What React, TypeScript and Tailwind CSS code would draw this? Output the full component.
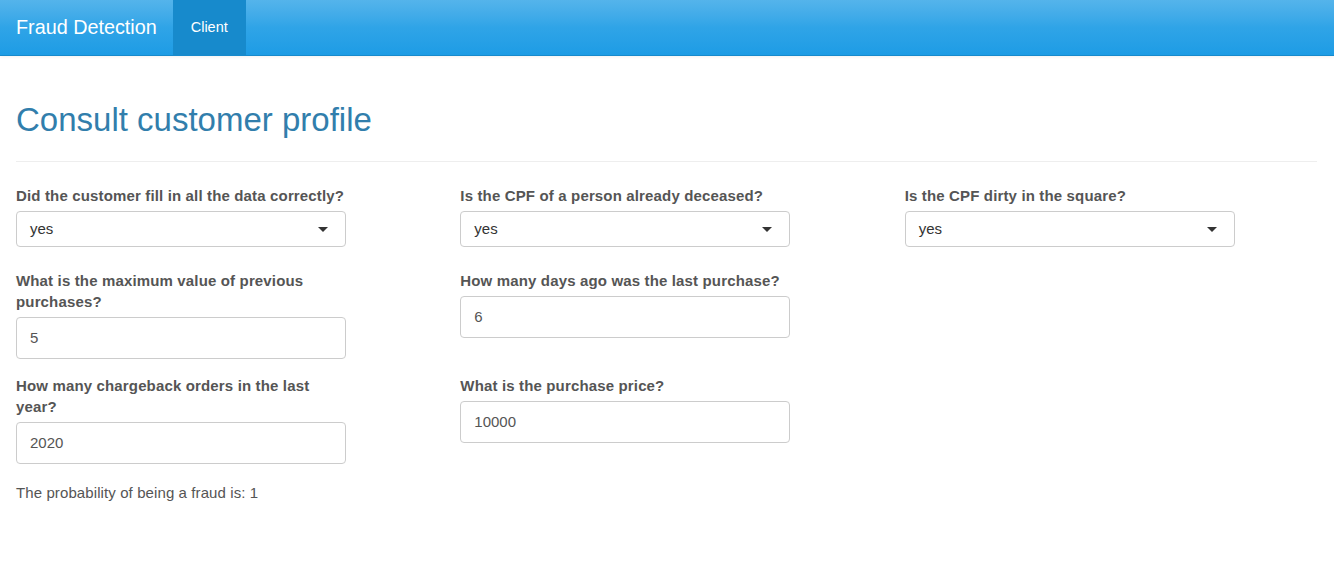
import type { ReactNode } from "react";

const font = { fontFamily: '"Liberation Sans", Arial, sans-serif' };

function Label({ children }: { children: ReactNode }) {
  return (
    <label className="mb-[5px] block text-[15px] font-bold leading-[21px] tracking-[0.15px] text-[#555555]">
      {children}
    </label>
  );
}

function SelectBox({ label }: { label: string }) {
  return (
    <div className="w-[330px]">
      <Label>{label}</Label>
      <div className="flex h-[36px] items-center justify-between rounded-[4px] border border-[#cccccc] bg-white pl-[13px] pr-[17px] text-[15px] text-[#333333]">
        <span>yes</span>
        <span className="h-0 w-0 border-x-[5px] border-t-[5px] border-x-transparent border-t-[#333333]" />
      </div>
    </div>
  );
}

function NumberBox({ label, value }: { label: string; value: string }) {
  return (
    <div className="w-[330px]">
      <Label>{label}</Label>
      <div className="flex h-[42px] items-center rounded-[4px] border border-[#cccccc] bg-white px-[13px] text-[15px] text-[#555555]">
        {value}
      </div>
    </div>
  );
}

export default function App() {
  return (
    <div className="min-h-[584px] bg-white" style={font}>
      <nav className="flex h-[56px] items-stretch border-b border-[#178acc] bg-gradient-to-b from-[#54b4eb] via-[#2fa4e7] to-[#1d9ce5] pl-[16px] shadow-[0_1px_3px_rgba(0,0,0,0.06)]">
        <span className="flex items-center pr-[16px] text-[19.8px] text-white">Fraud Detection</span>
        <span className="flex w-[73px] items-center justify-center bg-[#178acc] text-[14.5px] text-white">
          Client
        </span>
      </nav>

      <div className="pl-[16px] pr-[14px]">
        <h1 className="mt-[45px] pb-[22px] text-[33px] leading-[38px] text-[#317eac]">
          Consult customer profile
        </h1>
        <div className="mr-[3px] border-b border-[#eeeeee]" />

        <div className="mt-[23px] grid grid-cols-3 gap-x-[29px]">
          <SelectBox label="Did the customer fill in all the data correctly?" />
          <SelectBox label="Is the CPF of a person already deceased?" />
          <SelectBox label="Is the CPF dirty in the square?" />
        </div>

        <div className="mt-[23px] grid grid-cols-3 items-start gap-x-[29px]">
          <NumberBox label="What is the maximum value of previous purchases?" value="5" />
          <NumberBox label="How many days ago was the last purchase?" value="6" />
          <div />
        </div>

        <div className="mt-[16px] grid grid-cols-3 items-start gap-x-[29px]">
          <NumberBox label="How many chargeback orders in the last year?" value="2020" />
          <NumberBox label="What is the purchase price?" value="10000" />
          <div />
        </div>

        <p className="mt-[19px] text-[15px] leading-[20px] tracking-[0.1px] text-[#555555]">
          The probability of being a fraud is: 1
        </p>
      </div>
    </div>
  );
}
